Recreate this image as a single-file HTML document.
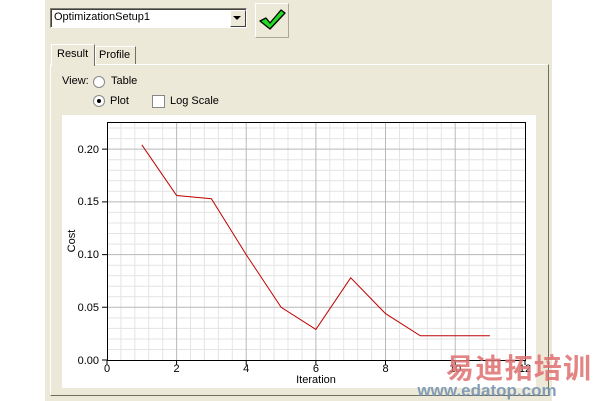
<!DOCTYPE html>
<html><head><style>
body{margin:0;width:600px;height:401px;background:#fff;position:relative;overflow:hidden;font-family:"Liberation Sans",Tahoma,sans-serif;font-size:11px;color:#000}
.a{position:absolute}
</style></head><body>
<div class="a" style="left:45px;top:0;width:507px;height:401px;background:#ece9d8"></div>
<div class="a" style="left:50px;top:8px;width:195px;height:18px;background:#fff;border:1px solid;border-color:#7f7d6f #fff #fff #7f7d6f;box-shadow:inset 1px 1px 0 #404040"></div>
<div class="a" style="left:54px;top:11px;font-size:11px">OptimizationSetup1</div>
<div class="a" style="left:230px;top:10px;width:14px;height:15px;background:#ece9d8;border:1px solid;border-color:#fff #404040 #404040 #fff"></div>
<div class="a" style="left:233px;top:16px;width:0;height:0;border-left:4px solid transparent;border-right:4px solid transparent;border-top:4px solid #000"></div>
<div class="a" style="left:255px;top:3px;width:32px;height:33px;border:1px solid;border-color:#fff #aca899 #aca899 #fff"></div>
<svg class="a" style="left:258px;top:8px" width="28" height="24"><path d="M2 13 L8 10 L12 15 L23 2 L27 5 L12 21 Z" fill="#22dd22" stroke="#000" stroke-width="1.3" stroke-linejoin="round"/></svg>
<div class="a" style="left:50px;top:64px;width:497px;height:330px;border:1px solid;border-color:#fff #716f64 #716f64 #fff;background:#ece9d8"></div>
<div class="a" style="left:51px;top:44px;width:42px;height:21px;background:#ece9d8;border:1px solid;border-color:#fff #716f64 transparent #fff;border-bottom:none"></div>
<div class="a" style="left:57px;top:48px;font-size:11px">Result</div>
<div class="a" style="left:95px;top:46px;width:39px;height:17px;border:1px solid;border-color:#fff #716f64 transparent #fff;border-bottom:none"></div>
<div class="a" style="left:99px;top:49px;font-size:11px">Profile</div>
<div class="a" style="left:62px;top:75px;font-size:11px">View:</div>
<div class="a" style="left:93px;top:76px;width:10px;height:10px;border-radius:50%;background:#fff;border:1px solid #888"></div>
<div class="a" style="left:111px;top:75px;font-size:11px">Table</div>
<div class="a" style="left:93px;top:95px;width:10px;height:10px;border-radius:50%;background:#fff;border:1px solid #888"></div>
<div class="a" style="left:97px;top:99px;width:4px;height:4px;border-radius:50%;background:#000"></div>
<div class="a" style="left:110px;top:95px;font-size:11px">Plot</div>
<div class="a" style="left:152px;top:95px;width:11px;height:11px;background:#fff;border:1px solid #888"></div>
<div class="a" style="left:170px;top:95px;font-size:11px">Log Scale</div>
<div class="a" style="left:62px;top:115px;width:474px;height:273px;background:#fff"></div>
<svg class="a" style="left:0;top:0" width="600" height="401" font-family="Liberation Sans,sans-serif" font-size="11">
<g stroke="#e4e4e4" stroke-width="1">
<path d="M120.9 122V360M134.8 122V360M148.7 122V360M162.7 122V360M190.5 122V360M204.4 122V360M218.4 122V360M232.3 122V360M260.2 122V360M274.1 122V360M288 122V360M302 122V360M329.8 122V360M343.7 122V360M357.7 122V360M371.6 122V360M399.5 122V360M413.4 122V360M427.3 122V360M441.3 122V360M469.1 122V360M483 122V360M497 122V360M510.9 122V360"/>
<path d="M107 349.5H525M107 339H525M107 328.4H525M107 317.9H525M107 296.8H525M107 286.2H525M107 275.7H525M107 265.2H525M107 244.1H525M107 233.5H525M107 223H525M107 212.4H525M107 191.3H525M107 180.8H525M107 170.2H525M107 159.7H525M107 138.6H525M107 128H525"/>
</g>
<g stroke="#b8b8b8"><path d="M176.6 122V360M246.2 122V360M315.9 122V360M385.5 122V360M455.2 122V360M107 307.3H525M107 254.6H525M107 201.9H525M107 149.1H525"/></g>
<rect x="107.5" y="122.5" width="418" height="238" fill="none" stroke="#000"/>
<g stroke="#000"><path d="M102 360H107M102 307.3H107M102 254.6H107M102 201.9H107M102 149.1H107M107 360V365M176.6 360V365M246.2 360V365M315.9 360V365M385.5 360V365M455.2 360V365M525 360V365"/></g>
<polyline fill="none" stroke="#c00000" stroke-width="1" points="141.8,144.8 176.6,195.5 211.4,198.7 246.2,254.6 281.1,307.3 315.9,329.4 350.7,277.8 385.5,313.6 420.3,335.8 489.9,335.8"/>
<g text-anchor="end"><text x="99" y="153">0.20</text><text x="99" y="205">0.15</text><text x="99" y="258">0.10</text><text x="99" y="311">0.05</text><text x="99" y="364">0.00</text></g>
<g text-anchor="middle"><text x="107" y="372">0</text><text x="176.6" y="372">2</text><text x="246.2" y="372">4</text><text x="315.9" y="372">6</text><text x="385.5" y="372">8</text><text x="455.2" y="372">10</text><text x="525" y="372">12</text><text x="316" y="383">Iteration</text></g>
<text x="75" y="241" text-anchor="middle" transform="rotate(-90 75 241)">Cost</text>
<text x="446" y="378" font-size="28" font-weight="bold" fill="#e07070" opacity="0.85" font-family="Noto Sans CJK SC,sans-serif" textLength="145">易迪拓培训</text>
<text x="487" y="396" font-size="17" font-weight="bold" fill="#7090b0" opacity="0.85" text-anchor="middle">www.edatop.com</text>
</svg>
</body></html>
